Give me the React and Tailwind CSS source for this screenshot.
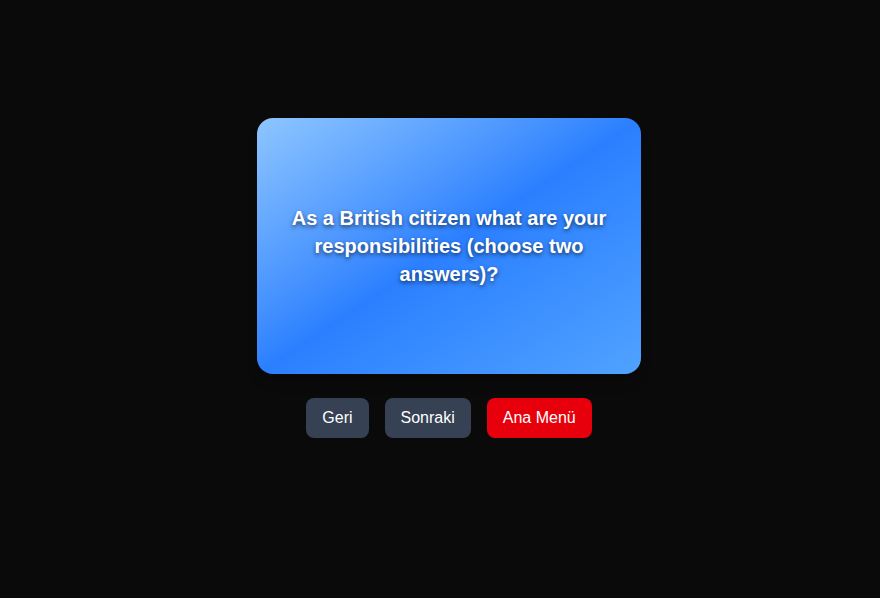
import React from "react"

export default function App() {
  return (
    <div className="min-h-screen bg-[#0a0a0a] flex flex-col items-center pt-[118px] pl-[18px] font-['Liberation_Sans',Arial,sans-serif]">
      <div className="w-96 h-64 rounded-2xl bg-gradient-to-br from-blue-300 via-blue-500 to-blue-400 flex items-center justify-center px-8 shadow-lg">
        <p className="text-white text-xl font-bold text-center [text-shadow:0_2px_4px_rgba(0,0,0,0.6)]">
          As a British citizen what are your responsibilities (choose two answers)?
        </p>
      </div>
      <div className="mt-6 flex gap-4">
        <button className="px-4 py-2 rounded-lg bg-gray-700 text-white">Geri</button>
        <button className="px-4 py-2 rounded-lg bg-gray-700 text-white">Sonraki</button>
        <button className="px-4 py-2 rounded-lg bg-red-600 text-white">Ana Menü</button>
      </div>
    </div>
  )
}
